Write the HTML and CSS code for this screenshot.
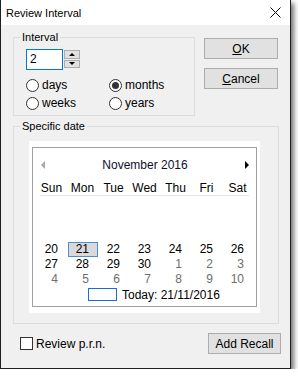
FILE: index.html
```html
<!DOCTYPE html>
<html lang="en">
<head>
  <meta charset="UTF-8" />
  <title>Review Interval</title>
  <link rel="stylesheet" href="styles.css">
</head>
<body>

<div class="window">
  <div class="titlebar">
    <span class="title">Review Interval</span>
    <svg class="close" width="11" height="11" viewBox="0 0 11 11">
      <path d="M0.5 0.5L10.5 10.5M10.5 0.5L0.5 10.5" stroke="#000" stroke-width="1" fill="none"/>
    </svg>
  </div>

  <div class="content">
    <div class="top-row">
      <fieldset class="group interval">
        <legend>Interval</legend>
        <div class="spin">
          <div class="spin-input">2</div>
          <div class="spin-btns">
            <span class="spin-btn"><span class="arrow-up"></span></span>
            <span class="spin-btn"><span class="arrow-down"></span></span>
          </div>
        </div>
        <div class="radios">
          <div class="radio"><span class="dot"></span>days</div>
          <div class="radio checked"><span class="dot"></span>months</div>
          <div class="radio"><span class="dot"></span>weeks</div>
          <div class="radio"><span class="dot"></span>years</div>
        </div>
      </fieldset>

      <div class="buttons">
        <div class="btn"><u>O</u>K</div>
        <div class="btn"><u>C</u>ancel</div>
      </div>
    </div>

    <fieldset class="group specific">
      <legend>Specific date</legend>
      <div class="cal-outer">
        <div class="cal">
          <div class="cal-head">
            <span class="arrow-left"></span>
            <span>November 2016</span>
            <span class="arrow-right"></span>
          </div>
          <div class="cal-days">
            <span>Sun</span><span>Mon</span><span>Tue</span><span>Wed</span><span>Thu</span><span>Fri</span><span>Sat</span>
          </div>
          <div class="cal-sep"></div>
          <div class="cal-grid">
            <div class="blank"></div>
            <span>20</span><span class="sel">21</span><span>22</span><span>23</span><span>24</span><span>25</span><span>26</span>
            <span>27</span><span>28</span><span>29</span><span>30</span><span class="other">1</span><span class="other">2</span><span class="other">3</span>
            <span class="other">4</span><span class="other">5</span><span class="other">6</span><span class="other">7</span><span class="other">8</span><span class="other">9</span><span class="other">10</span>
          </div>
          <div class="today">
            <span class="today-box"></span>
            <span>Today: 21/11/2016</span>
          </div>
        </div>
      </div>
    </fieldset>

    <div class="bottom">
      <div class="check"><span class="box"></span>Review p.r.n.</div>
      <div class="btn recall">Add Recall</div>
    </div>
  </div>
</div>

</body>
</html>
```

FILE: styles.css
```css
body {
  margin: 0;
  background: #fff;
  font-family: "Liberation Sans", Arial, sans-serif;
  font-size: 11px;
  color: #000;
}

.window {
  width: 291px;
  height: 369px;
  box-sizing: border-box;
  border: 1px solid #1f1f1f;
  border-top: 0;
  background: #f0f0f0;
  box-shadow: 3px 3px 5px rgba(0, 0, 0, 0.55);
  display: flex;
  flex-direction: column;
}

.titlebar {
  height: 25px;
  flex: none;
  background: #fff;
  display: flex;
  align-items: center;
  justify-content: space-between;
  padding: 0 9px 0 5px;
}

.title {
  font-size: 11px;
}

.content {
  padding: 4px 10px 0 12px;
}

.top-row {
  display: flex;
  gap: 9px;
}

fieldset.group {
  margin: 0;
  padding: 0;
  border: 1px solid #dcdcdc;
  min-width: 0;
}

fieldset.group legend {
  padding: 0 2px;
  margin-left: 6px;
  line-height: 16px;
}

.interval {
  width: 182px;
  box-sizing: border-box;
}

.spin {
  display: flex;
  margin: 4px 0 0 12px;
  height: 21px;
}

.spin-input {
  width: 37px;
  box-sizing: border-box;
  border: 1px solid #0078d7;
  background: #fff;
  font-size: 12px;
  line-height: 19px;
  padding-left: 3px;
}

.spin-btns {
  display: flex;
  flex-direction: column;
  gap: 1px;
  padding: 1px 0 2px 1px;
}

.spin-btn {
  width: 16px;
  flex: 1;
  box-sizing: border-box;
  border: 1px solid #adadad;
  background: #e1e1e1;
  display: flex;
  align-items: center;
  justify-content: center;
}

.arrow-up {
  border-left: 3px solid transparent;
  border-right: 3px solid transparent;
  border-bottom: 3px solid #000;
}

.arrow-down {
  border-left: 3px solid transparent;
  border-right: 3px solid transparent;
  border-top: 3px solid #000;
}

.radios {
  display: grid;
  grid-template-columns: 83px auto;
  grid-auto-rows: 18px;
  margin: 6px 0 3px 12px;
}

.radio {
  display: flex;
  align-items: center;
  gap: 3px;
  font-size: 12px;
}

.radio .dot {
  width: 13px;
  height: 13px;
  box-sizing: border-box;
  border: 1px solid #333;
  border-radius: 50%;
  background: #fff;
  display: flex;
  align-items: center;
  justify-content: center;
}

.radio.checked .dot::after {
  content: "";
  width: 7px;
  height: 7px;
  border-radius: 50%;
  background: #333;
}

.buttons {
  display: flex;
  flex-direction: column;
  gap: 9px;
  margin-top: 9px;
}

.btn {
  width: 74px;
  height: 21px;
  box-sizing: border-box;
  border: 1px solid #adadad;
  background: #e1e1e1;
  display: flex;
  align-items: center;
  justify-content: center;
  font-size: 12px;
}

.btn u {
  text-decoration-thickness: 1px;
  text-underline-offset: 1px;
}

.specific {
  width: 266px;
  box-sizing: border-box;
  margin-top: 2px !important;
}

.cal-outer {
  width: 231px;
  box-sizing: border-box;
  background: #fff;
  padding: 6px 3px;
  margin: 7px 0 10px 15px;
}

.cal {
  border: 1px solid #a0a0a0;
  background: #fff;
  height: 160px;
  box-sizing: border-box;
  font-size: 12px;
}

.cal-head {
  height: 33px;
  display: flex;
  align-items: center;
  justify-content: space-between;
  padding: 0 7px 0 8px;
  color: #0f0f2a;
}

.arrow-left {
  border-top: 4px solid transparent;
  border-bottom: 4px solid transparent;
  border-right: 4px solid #a8a8a8;
}

.arrow-right {
  border-top: 4px solid transparent;
  border-bottom: 4px solid transparent;
  border-left: 4px solid #000;
}

.cal-days {
  display: grid;
  grid-template-columns: repeat(7, 31px);
  margin-left: 3px;
  height: 14px;
  line-height: 14px;
  text-align: center;
}

.cal-sep {
  height: 1px;
  background: #e6e6e6;
  margin: 0 7px 1px 7px;
}

.cal-grid {
  display: grid;
  grid-template-columns: repeat(7, 31px);
  grid-auto-rows: 15px;
  margin-left: 3px;
  line-height: 15px;
}

.cal-grid .blank {
  grid-column: 1 / -1;
  grid-row: span 3;
}

.cal-grid span {
  text-align: right;
  padding-right: 9px;
}

.cal-grid .other {
  color: #6d6d6d;
}

.cal-grid .sel {
  background: #d9d9d9;
  box-shadow: inset 0 0 0 1px #4a8fd6;
  margin-left: 1px;
  padding-right: 9px;
}

.today {
  display: flex;
  align-items: center;
  gap: 5px;
  height: 15px;
  padding-left: 55px;
}

.today-box {
  width: 29px;
  height: 13px;
  box-sizing: border-box;
  border: 1px solid #1a6fd0;
}

.bottom {
  display: flex;
  justify-content: space-between;
  align-items: center;
  margin-top: 9px;
  padding-left: 7px;
}

.check {
  display: flex;
  align-items: center;
  gap: 3px;
  font-size: 12px;
}

.check .box {
  width: 13px;
  height: 13px;
  box-sizing: border-box;
  border: 1px solid #333;
  background: #fff;
}

.btn.recall {
  width: 73px;
  margin-right: -1px;
}
```
